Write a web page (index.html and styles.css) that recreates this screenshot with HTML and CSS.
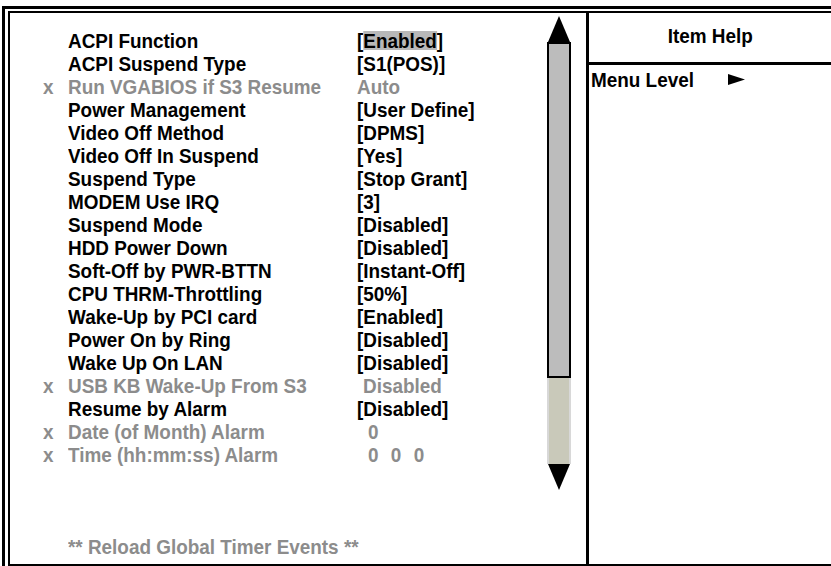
FILE: index.html
```html
<!DOCTYPE html>
<html lang="en">
<head>
  <meta charset="UTF-8">
  <meta name="viewport" content="width=device-width, initial-scale=1.0">
  <title>Power Management Setup</title>
  <link rel="stylesheet" href="styles.css">
</head>
<body>
  <div class="frame">
    <div class="panel">
      <div class="menu">
        <div class="items">
          <div class="row"><span class="mark"></span><span class="label"><span class="t">ACPI Function</span></span><span class="value"><span class="t">[<span class="sel">Enabled</span>]</span></span></div>
          <div class="row"><span class="mark"></span><span class="label"><span class="t">ACPI Suspend Type</span></span><span class="value"><span class="t">[S1(POS)]</span></span></div>
          <div class="row off"><span class="mark"><span class="t">x</span></span><span class="label"><span class="t">Run VGABIOS if S3 Resume</span></span><span class="value"><span class="t">Auto</span></span></div>
          <div class="row"><span class="mark"></span><span class="label"><span class="t">Power Management</span></span><span class="value"><span class="t">[User Define]</span></span></div>
          <div class="row"><span class="mark"></span><span class="label"><span class="t">Video Off Method</span></span><span class="value"><span class="t">[DPMS]</span></span></div>
          <div class="row"><span class="mark"></span><span class="label"><span class="t">Video Off In Suspend</span></span><span class="value"><span class="t">[Yes]</span></span></div>
          <div class="row"><span class="mark"></span><span class="label"><span class="t">Suspend Type</span></span><span class="value"><span class="t">[Stop Grant]</span></span></div>
          <div class="row"><span class="mark"></span><span class="label"><span class="t">MODEM Use IRQ</span></span><span class="value"><span class="t">[3]</span></span></div>
          <div class="row"><span class="mark"></span><span class="label"><span class="t">Suspend Mode</span></span><span class="value"><span class="t">[Disabled]</span></span></div>
          <div class="row"><span class="mark"></span><span class="label"><span class="t">HDD Power Down</span></span><span class="value"><span class="t">[Disabled]</span></span></div>
          <div class="row"><span class="mark"></span><span class="label"><span class="t">Soft-Off by PWR-BTTN</span></span><span class="value"><span class="t">[Instant-Off]</span></span></div>
          <div class="row"><span class="mark"></span><span class="label"><span class="t">CPU THRM-Throttling</span></span><span class="value"><span class="t">[50%]</span></span></div>
          <div class="row"><span class="mark"></span><span class="label"><span class="t">Wake-Up by PCI card</span></span><span class="value"><span class="t">[Enabled]</span></span></div>
          <div class="row"><span class="mark"></span><span class="label"><span class="t">Power On by Ring</span></span><span class="value"><span class="t">[Disabled]</span></span></div>
          <div class="row"><span class="mark"></span><span class="label"><span class="t">Wake Up On LAN</span></span><span class="value"><span class="t">[Disabled]</span></span></div>
          <div class="row off"><span class="mark"><span class="t">x</span></span><span class="label"><span class="t">USB KB Wake-Up From S3</span></span><span class="value indent"><span class="t">Disabled</span></span></div>
          <div class="row"><span class="mark"></span><span class="label"><span class="t">Resume by Alarm</span></span><span class="value"><span class="t">[Disabled]</span></span></div>
          <div class="row off"><span class="mark"><span class="t">x</span></span><span class="label"><span class="t">Date (of Month) Alarm</span></span><span class="value indent2"><span class="t">0</span></span></div>
          <div class="row off"><span class="mark"><span class="t">x</span></span><span class="label"><span class="t">Time (hh:mm:ss) Alarm</span></span><span class="value indent2"><span class="t zeros">0  0  0</span></span></div>
          <div class="row"></div>
          <div class="row"></div>
          <div class="row"></div>
          <div class="row off"><span class="mark"></span><span class="label wide"><span class="t">** Reload Global Timer Events **</span></span></div>
        </div>
        <div class="scrollbar">
          <svg class="arrow" width="24" height="26" viewBox="0 0 24 26"><polygon points="12,0 23,26 1,26" fill="#000"/></svg>
          <div class="thumb"></div>
          <div class="track"></div>
          <svg class="arrow" width="24" height="26" viewBox="0 0 24 26"><polygon points="1,0 23,0 12,26" fill="#000"/></svg>
        </div>
      </div>
      <div class="help">
        <div class="help-title"><span class="t">Item Help</span></div>
        <div class="help-body">
          <span class="t">Menu Level</span>
          <svg class="level" width="17" height="11" viewBox="0 0 17 11"><polygon points="0,0 17,5.5 0,11" fill="#000"/></svg>
        </div>
      </div>
    </div>
  </div>
</body>
</html>
```

FILE: styles.css
```css
html, body {
  margin: 0;
  background-color: #fff;
}
body {
  font-family: "Liberation Sans", Arial, sans-serif;
  font-weight: bold;
  font-size: 21px;
  color: #000;
  overflow: hidden;
}
/* no narrow face installed: squeeze the bold one */
.t {
  display: inline-block;
  transform: scaleX(0.9);
  transform-origin: left center;
}
.frame {
  margin: 6px 0 0 2px;
  border-left: 3px solid #000;
  border-top: 3px solid #000;
  padding: 2px 0 0 3px;
  height: 560px;
  box-sizing: border-box;
}
.panel {
  display: flex;
  height: 100%;
  border-left: 2px solid #000;
  border-top: 2px solid #000;
  border-bottom: 2px solid #000;
  box-sizing: border-box;
}
.menu {
  display: flex;
  width: 576px;
  border-right: 3px solid #000;
}
.items {
  width: 537px;
  padding: 16px 0 0 33px;
  box-sizing: border-box;
}
.row {
  display: flex;
  height: 23px;
  line-height: 23px;
  white-space: pre;
}
.mark {
  width: 25px;
  flex: none;
}
.label {
  width: 289px;
  flex: none;
}
.label.wide {
  width: auto;
}
.off {
  color: #8c8c8c;
}
.sel {
  display: inline-block;
  line-height: 19px;
  background-color: #b8b8b8;
}
.indent {
  padding-left: 6px;
}
.indent2 {
  padding-left: 11px;
}
.zeros {
  word-spacing: 1px;
}
.scrollbar {
  display: flex;
  flex-direction: column;
  width: 24px;
  margin-top: 3px;
}
.arrow {
  display: block;
}
.thumb {
  height: 336px;
  background-color: #bcbcbc;
  border: 2px solid #000;
  box-sizing: border-box;
}
.track {
  height: 86px;
  background-color: #c9c9ba;
  border-left: 2px solid #d8d8d8;
  border-right: 2px solid #d8d8d8;
}
.help {
  flex: 1;
  display: flex;
  flex-direction: column;
}
.help-title {
  height: 49px;
  border-bottom: 3px solid #000;
  text-align: center;
  line-height: 46px;
}
.help-title .t {
  transform-origin: center;
}
.help-body {
  display: flex;
  align-items: center;
  padding: 3px 0 0 2px;
  height: 23px;
  line-height: 23px;
}
.level {
  margin-left: 23px;
}
```
